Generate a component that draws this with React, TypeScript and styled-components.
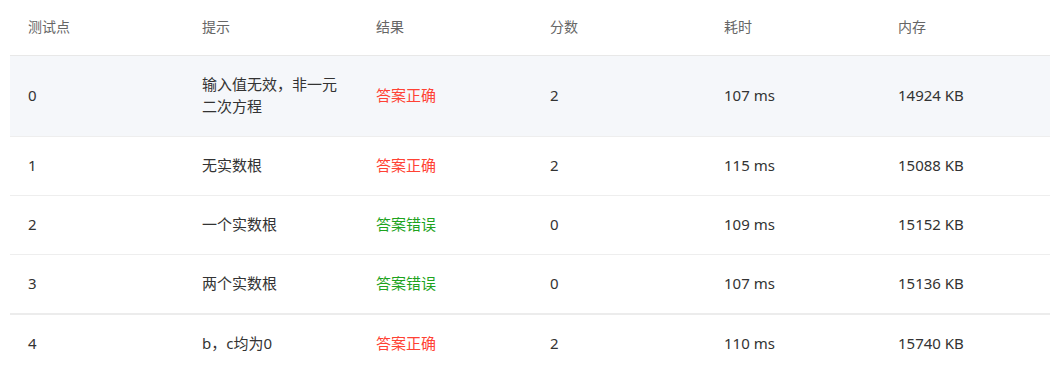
import styled, { createGlobalStyle } from "styled-components";

const GlobalStyle = createGlobalStyle`
    body {
        margin: 0;
        background: #fff;
        overflow: hidden;
        font-family: "Noto Sans", "Noto Sans CJK SC", sans-serif;
    }
`;

const Wrapper = styled.div`
    padding-left: 10px;
    width: 1044px;
`;

const Table = styled.table`
    width: 1044px;
    border-collapse: collapse;
    table-layout: fixed;
`;

const HeadCell = styled.th`
    text-align: left;
    font-weight: normal;
    font-size: 14px;
    line-height: 22px;
    color: #666;
    padding: 16px 18px 17px;
    border-bottom: 1px solid #e8e8e8;
`;

const Row = styled.tr<{ $striped?: boolean; $thick?: boolean }>`
    background: ${p => (p.$striped ? "#f5f7fa" : "#fff")};
    border-top: ${p => (p.$thick ? "2px solid #ececec" : "none")};
`;

const Cell = styled.td<{ $last?: boolean }>`
    font-size: 15px;
    line-height: 22px;
    color: #333;
    padding: 17px 18px 19px;
    border-bottom: ${p => (p.$last ? "none" : "1px solid #eeeeee")};
    vertical-align: middle;
`;

const Status = styled.span<{ $ok: boolean }>`
    color: ${p => (p.$ok ? "#ff4234" : "#1ea31e")};
`;

interface ITestCase {
    id: number;
    hint: string;
    ok: boolean;
    score: number;
    time: number;
    memory: number;
}

const cases: ITestCase[] = [
    { id: 0, hint: "输入值无效，非一元二次方程", ok: true, score: 2, time: 107, memory: 14924 },
    { id: 1, hint: "无实数根", ok: true, score: 2, time: 115, memory: 15088 },
    { id: 2, hint: "一个实数根", ok: false, score: 0, time: 109, memory: 15152 },
    { id: 3, hint: "两个实数根", ok: false, score: 0, time: 107, memory: 15136 },
    { id: 4, hint: "b，c均为0", ok: true, score: 2, time: 110, memory: 15740 },
];

export default function App() {
    return (
        <Wrapper>
            <GlobalStyle />
            <Table>
                <thead>
                    <tr>
                        <HeadCell>测试点</HeadCell>
                        <HeadCell>提示</HeadCell>
                        <HeadCell>结果</HeadCell>
                        <HeadCell>分数</HeadCell>
                        <HeadCell>耗时</HeadCell>
                        <HeadCell>内存</HeadCell>
                    </tr>
                </thead>
                <tbody>
                    {cases.map((c, i) => {
                        const last = i === cases.length - 1;
                        return (
                            <Row key={c.id} $striped={i === 0} $thick={last}>
                                <Cell $last={last}>{c.id}</Cell>
                                <Cell $last={last}>{c.hint}</Cell>
                                <Cell $last={last}>
                                    <Status $ok={c.ok}>{c.ok ? "答案正确" : "答案错误"}</Status>
                                </Cell>
                                <Cell $last={last}>{c.score}</Cell>
                                <Cell $last={last}>{c.time} ms</Cell>
                                <Cell $last={last}>{c.memory} KB</Cell>
                            </Row>
                        );
                    })}
                </tbody>
            </Table>
        </Wrapper>
    );
}
